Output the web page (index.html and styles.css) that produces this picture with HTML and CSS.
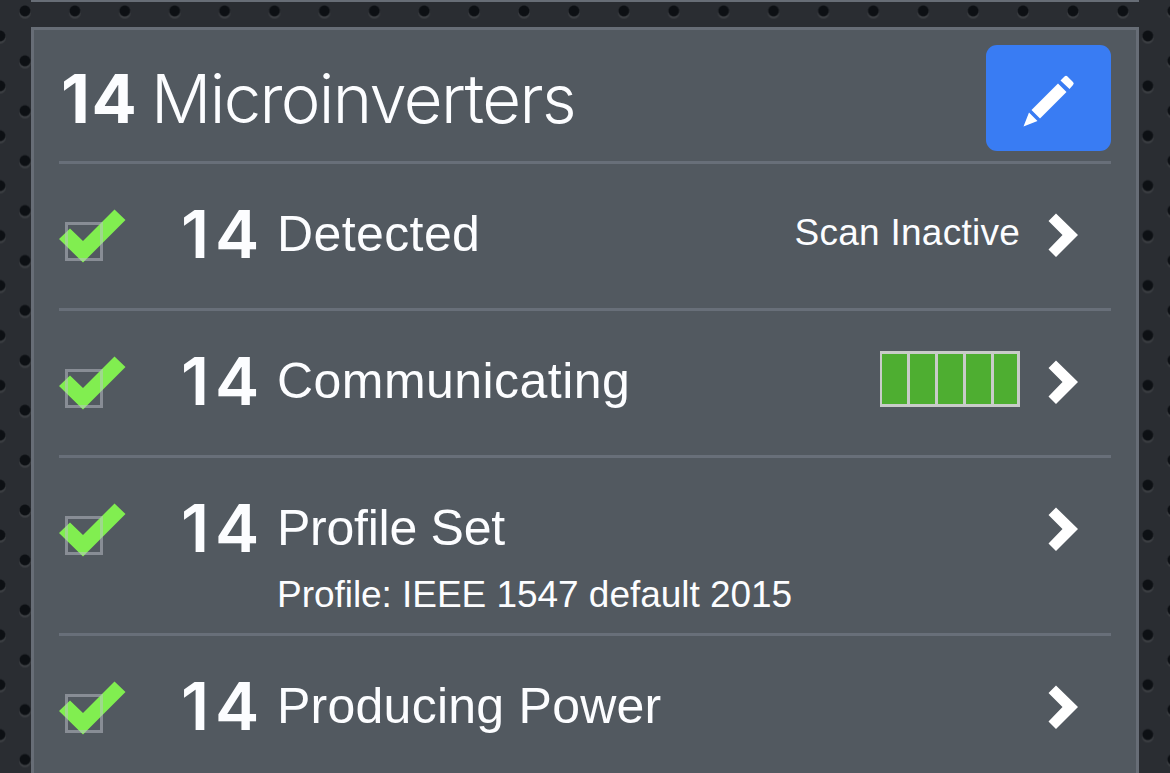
FILE: index.html
```html
<!DOCTYPE html>
<html lang="en">
<head>
<meta charset="utf-8">
<title>Microinverters</title>
<link rel="stylesheet" href="styles.css">
</head>
<body>
<svg class="defs" aria-hidden="true">
  <symbol id="check" viewBox="0 0 68 56">
    <path class="tick" d="M0 30 11 19.500 24 32 55.500 .5 66.500 11 24 53.500Z"/>
    <rect class="box" x="7.500" y="14.500" width="35" height="36"/>
  </symbol>
  <symbol id="chevron" viewBox="0 0 32 46">
    <path class="arrow" d="M8 .5 30 22 8 44 .5 36.500 14.500 22 .5 8Z"/>
  </symbol>
</svg>
<div class="previous"></div>
<main class="panel">
  <header class="header">
    <h1 class="title"><b class="total">14</b><span class="device">Microinverters</span></h1>
    <button class="edit" aria-label="Edit">
      <svg class="pencil" viewBox="0 0 52 52"><path d="M41.500 1.500Q43 0 44.500 1.500L50 7Q51.500 8.500 50 10L46.500 14 37.500 5.500ZM35 8.500 43.500 17 17 43.500 8.500 35ZM6 37.500 14.500 46 .5 51.500Z"/></svg>
    </button>
  </header>
  <section class="row">
    <svg class="check"><use href="#check"/></svg>
    <b class="count">14</b>
    <div class="label"><div class="name detected">Detected</div></div>
    <span class="status">Scan Inactive</span>
    <svg class="chevron"><use href="#chevron"/></svg>
  </section>
  <section class="row">
    <svg class="check"><use href="#check"/></svg>
    <b class="count">14</b>
    <div class="label"><div class="name communicating">Communicating</div></div>
    <div class="meter"><i></i><i></i><i></i><i></i><i></i></div>
    <svg class="chevron"><use href="#chevron"/></svg>
  </section>
  <section class="row tall">
    <svg class="check"><use href="#check"/></svg>
    <b class="count">14</b>
    <div class="label"><div class="name profile">Profile Set</div><div class="detail">Profile: IEEE 1547 default 2015</div></div>
    <svg class="chevron"><use href="#chevron"/></svg>
  </section>
  <section class="row">
    <svg class="check"><use href="#check"/></svg>
    <b class="count">14</b>
    <div class="label"><div class="name producing">Producing Power</div></div>
    <svg class="chevron"><use href="#chevron"/></svg>
  </section>
</main>
</body>
</html>
```
FILE: styles.css
```css
* { box-sizing: border-box; }
body {
  margin: 0;
  height: 773px;
  overflow: hidden;
  color: #fcfdff;
  font-family: "Liberation Sans", Arial, sans-serif;
  background-color: #2a2d32;
  background-image:
    radial-gradient(circle at 50% 50%, #0d1014 4.800px, transparent 6px),
    radial-gradient(circle at 50% 54%, #3b3e42 5px, transparent 6.500px),
    radial-gradient(circle at 50% 50%, #0d1014 4.800px, transparent 6px),
    radial-gradient(circle at 50% 54%, #3b3e42 5px, transparent 6.500px);
  background-size: 49.920px 49.920px;
  background-position: 0 -14px, 0 -14px, -25px 11px, -25px 11px;
}
.defs { display: none; }
.previous { height: 2px; margin: 0 31px; background: #676d76; }
.panel {
  width: 1108px;
  height: 760px;
  margin: 25px 0 0 31px;
  padding: 0 25px;
  background: #525960;
  border: 3px solid #676d76;
}
.header {
  height: 134px;
  display: flex;
  justify-content: space-between;
  border-bottom: 3px solid #686f79;
}
.title { display: flex; margin: 35px 0 0 2px; font-size: 67px; line-height: 68px; }
.total { width: 90px; font-family: Inter, sans-serif; font-weight: 700; letter-spacing: 1.500px; }
.device { font-family: Inter, sans-serif; font-weight: 300; letter-spacing: -1.650px; }
.edit {
  width: 125px;
  height: 106px;
  margin-top: 15px;
  padding: 0;
  border: 0;
  border-radius: 11px;
  background: #397cf3;
  display: flex;
  align-items: center;
  justify-content: center;
}
.pencil { width: 52px; height: 52px; fill: #fff; margin-top: 6px; }
.row {
  height: 147px;
  display: flex;
  align-items: flex-start;
  border-bottom: 3px solid #686f79;
}
.row.tall { height: 178px; }
.check { width: 68px; height: 56px; margin-top: 45px; flex: none; }
.tick { fill: #81ee50; }
.box { fill: none; stroke: rgba(190, 193, 202, .5); stroke-width: 3; }
.count { width: 96px; margin: 36px 0 0 54px; font-family: Inter, sans-serif; font-weight: 600; font-size: 66.500px; line-height: 68px; letter-spacing: 6px; flex: none; }
.label { flex: 1; margin-top: 45px; white-space: nowrap; }
.name { font-size: 50px; line-height: 50px; }
.detected { letter-spacing: .4px; }
.communicating { letter-spacing: .45px; }
.profile { letter-spacing: -.25px; }
.producing { letter-spacing: .25px; }
.detail { margin-top: 23px; font-size: 37px; line-height: 37px; letter-spacing: -.04px; }
.status { margin-top: 50px; font-size: 37px; line-height: 37px; letter-spacing: .25px; }
.meter {
  width: 140px;
  height: 56px;
  margin-top: 40px;
  padding: 3px 3px 3px 2px;
  display: flex;
  gap: 3px;
  background: #c9ccc9;
}
.meter i { width: 25px; flex: none; background: #4eae31; }
.meter i:last-child { flex: 1; }
.chevron { width: 32px; height: 46px; margin: 49px 31px 0 28px; flex: none; }
.arrow { fill: #fff; }
```
